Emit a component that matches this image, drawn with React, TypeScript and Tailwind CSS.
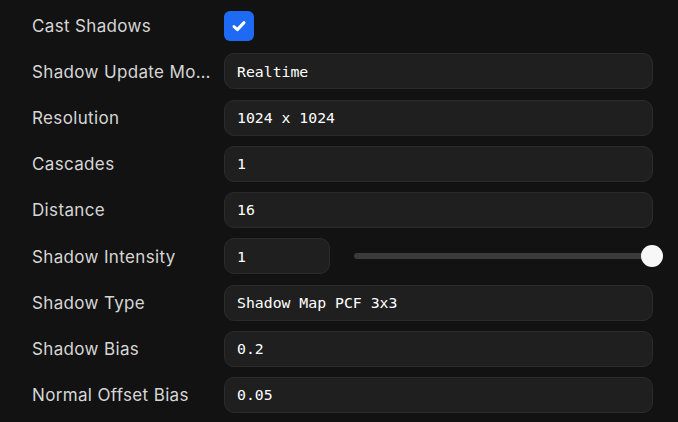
import React from "react";

const mono = { fontFamily: '"DejaVu Sans Mono", "Liberation Mono", monospace' };

function Label({ children }: { children: React.ReactNode }) {
  return (
    <div className="w-[224px] shrink-0 pl-[32px] pr-[10px] pt-[2px] truncate text-[17px] tracking-[0.35px] text-[#d6d6d6]">
      {children}
    </div>
  );
}

function Field({ value, className = "" }: { value: string; className?: string }) {
  return (
    <div
      className={`h-[36px] flex items-center rounded-[10px] border border-[#2b2b2b] bg-[#1f1f1f] pl-[12px] pt-[1px] text-[14.8px] text-white ${className}`}
      style={mono}
    >
      {value}
    </div>
  );
}

function Row({ label, children }: { label: string; children: React.ReactNode }) {
  return (
    <div className="flex items-center h-[36px]">
      <Label>{label}</Label>
      {children}
    </div>
  );
}

export default function App() {
  return (
    <div
      className="w-[678px] h-[422px] bg-[#121212] pt-[8px] flex flex-col gap-[10.25px] overflow-hidden"
      style={{ fontFamily: 'Inter, "Noto Sans", sans-serif' }}
    >
      <div className="flex items-center h-[35px]">
        <Label>Cast Shadows</Label>
        <div className="w-[30px] h-[30px] rounded-[6px] bg-[#1f6af5] flex items-center justify-center">
          <svg width="18" height="18" viewBox="0 0 18 18">
            <path d="M4 9.6 L7.4 12.6 L14 5.6" fill="none" stroke="white" strokeWidth="3" strokeLinecap="round" strokeLinejoin="round" />
          </svg>
        </div>
      </div>
      <Row label="Shadow Update Mode">
        <Field value="Realtime" className="w-[429px]" />
      </Row>
      <Row label="Resolution">
        <Field value="1024 x 1024" className="w-[429px]" />
      </Row>
      <Row label="Cascades">
        <Field value="1" className="w-[429px]" />
      </Row>
      <Row label="Distance">
        <Field value="16" className="w-[429px]" />
      </Row>
      <Row label="Shadow Intensity">
        <Field value="1" className="w-[106px]" />
        <div className="relative ml-[24px] w-[298px] h-[6px] rounded-full bg-[#3a3a3a]">
          <div className="absolute right-[-11px] top-[-8px] w-[22px] h-[22px] rounded-full bg-[#f7f7f7]" />
        </div>
      </Row>
      <Row label="Shadow Type">
        <Field value="Shadow Map PCF 3x3" className="w-[429px]" />
      </Row>
      <Row label="Shadow Bias">
        <Field value="0.2" className="w-[429px]" />
      </Row>
      <Row label="Normal Offset Bias">
        <Field value="0.05" className="w-[429px]" />
      </Row>
    </div>
  );
}
